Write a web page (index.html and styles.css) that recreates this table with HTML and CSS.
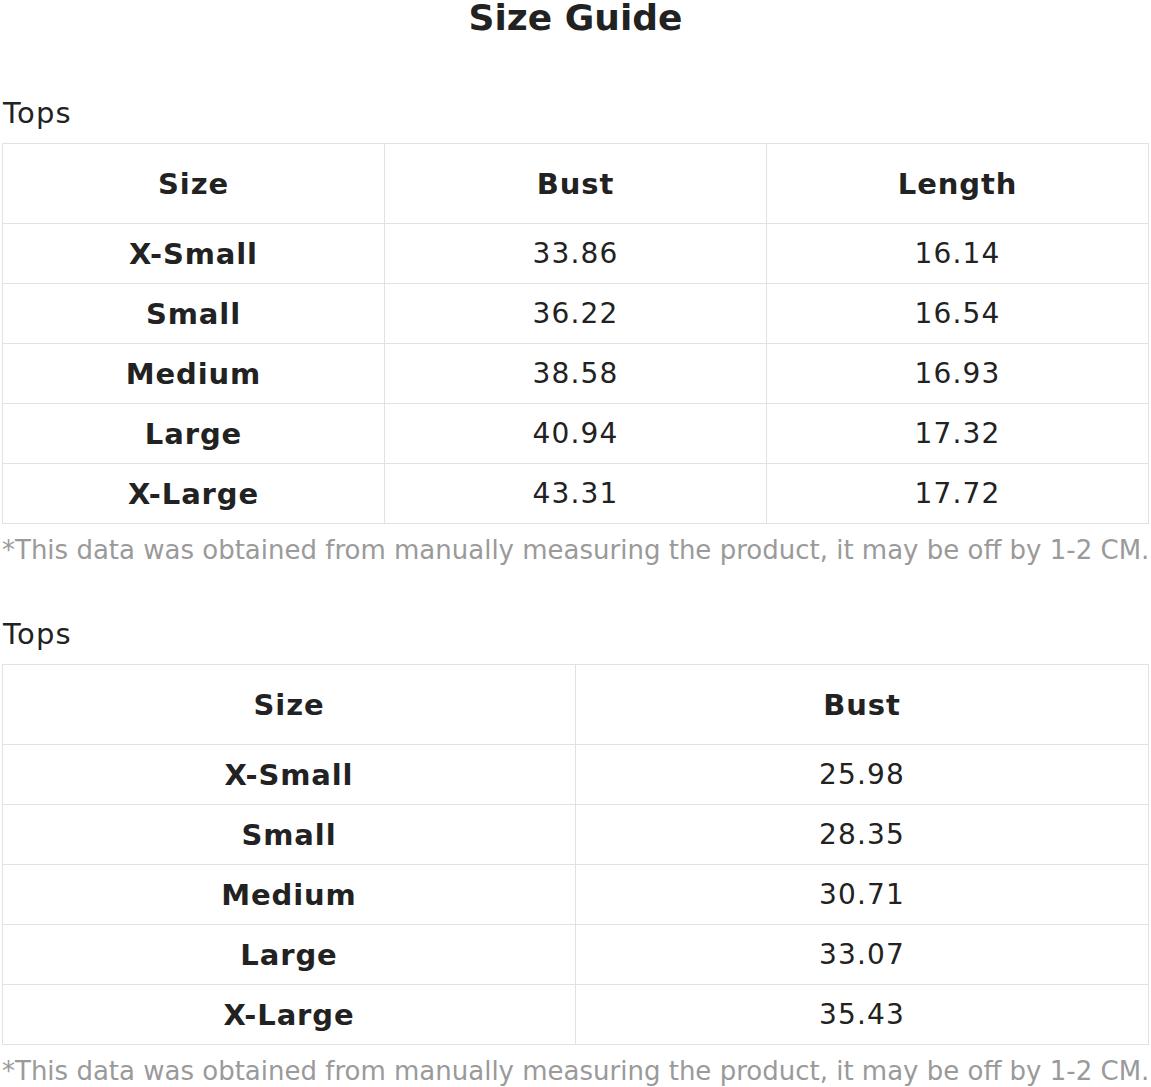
FILE: index.html
```html
<!DOCTYPE html>
<html>
<head>
<meta charset="utf-8">
<link rel="stylesheet" href="styles.css">
</head>
<body>
<div class="page">
  <h1 class="title">Size Guide</h1>
  <section class="section">
    <h2 class="cat">Tops</h2>
    <table class="chart">
      <thead>
        <tr><th>Size</th><th>Bust</th><th>Length</th></tr>
      </thead>
      <tbody>
        <tr><th>X-Small</th><td>33.86</td><td>16.14</td></tr>
        <tr><th>Small</th><td>36.22</td><td>16.54</td></tr>
        <tr><th>Medium</th><td>38.58</td><td>16.93</td></tr>
        <tr><th>Large</th><td>40.94</td><td>17.32</td></tr>
        <tr><th>X-Large</th><td>43.31</td><td>17.72</td></tr>
      </tbody>
    </table>
    <p class="note">*This data was obtained from manually measuring the product, it may be off by 1-2 CM.</p>
  </section>
  <section class="section">
    <h2 class="cat">Tops</h2>
    <table class="chart">
      <thead>
        <tr><th>Size</th><th>Bust</th></tr>
      </thead>
      <tbody>
        <tr><th>X-Small</th><td>25.98</td></tr>
        <tr><th>Small</th><td>28.35</td></tr>
        <tr><th>Medium</th><td>30.71</td></tr>
        <tr><th>Large</th><td>33.07</td></tr>
        <tr><th>X-Large</th><td>35.43</td></tr>
      </tbody>
    </table>
    <p class="note">*This data was obtained from manually measuring the product, it may be off by 1-2 CM.</p>
  </section>
</div>
</body>
</html>
```
FILE: styles.css
```css
html, body {
  margin: 0;
  padding: 0;
  background: #fff;
}
.page {
  font-family: "DejaVu Sans", sans-serif;
  color: #222;
  padding: 0 2px;
}
.title {
  margin: 0;
  font-size: 36px;
  line-height: 36px;
  font-weight: bold;
  text-align: center;
  color: #222;
}
.section {
  margin-top: 59px;
}
.section + .section {
  margin-top: 49px;
}
.cat {
  margin: 0 0 12px 1px;
  font-size: 29px;
  font-weight: normal;
  letter-spacing: 1.2px;
  line-height: 36px;
  color: #222;
}
.chart {
  width: 100%;
  border-collapse: collapse;
  table-layout: fixed;
  font-size: 28px;
}
.chart th, .chart td {
  border: 1px solid #e2e2e2;
  text-align: center;
  vertical-align: middle;
  height: 59px;
  padding: 0;
  color: #222;
}
.chart th {
  font-weight: bold;
  font-size: 29px;
  letter-spacing: 0.9px;
}
.chart td {
  font-weight: normal;
  letter-spacing: 1.2px;
}
.chart thead th {
  height: 79px;
}
.note {
  margin: 9px 0 0 0;
  font-size: 26px;
  line-height: 34px;
  color: #9a9a9a;
  white-space: nowrap;
}
```
